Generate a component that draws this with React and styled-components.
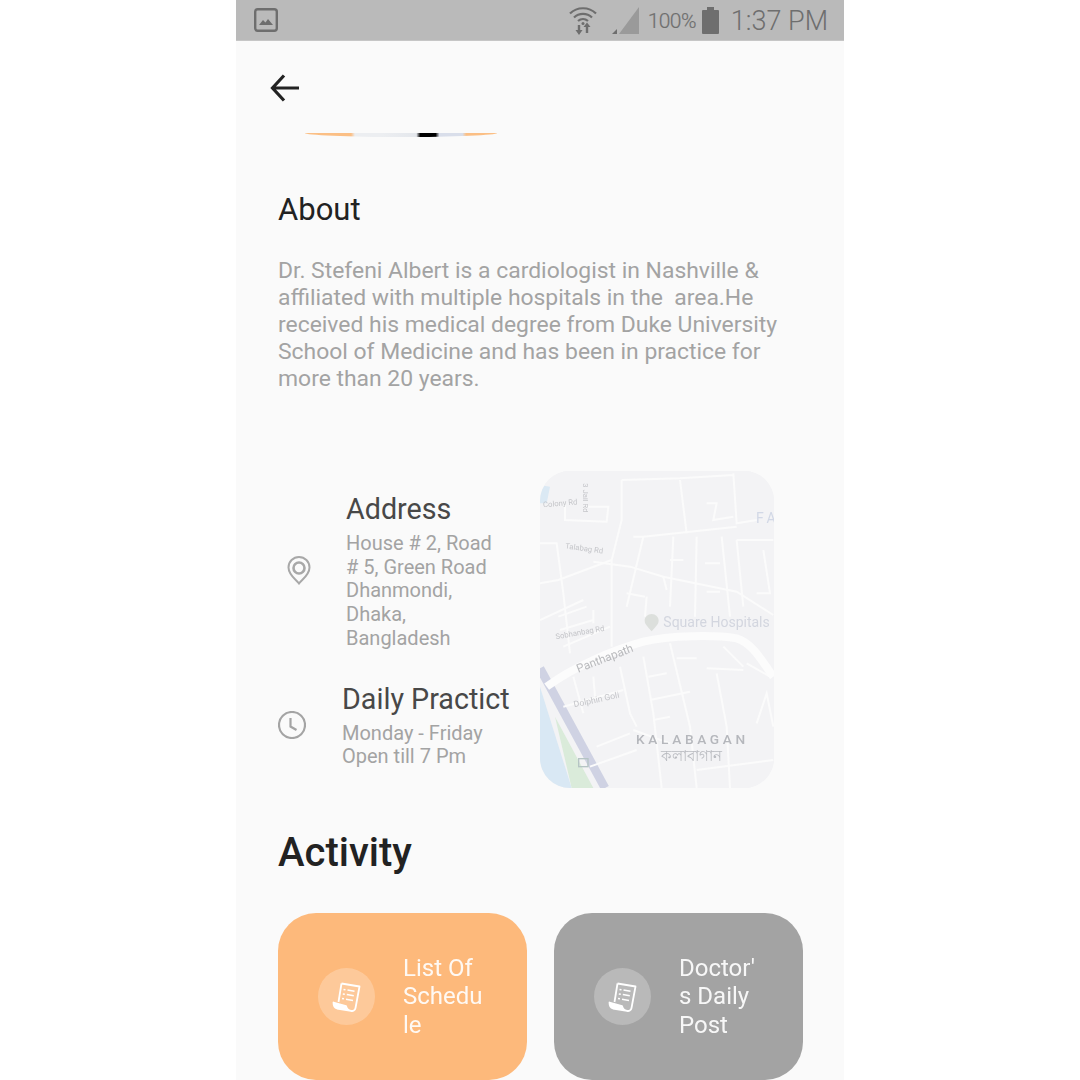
import styled, { createGlobalStyle } from "styled-components";

const Global = createGlobalStyle`
  html, body {
    margin: 0;
    padding: 0;
    background: #fff;
  }
  * {
    box-sizing: border-box;
  }
`;

const Phone = styled.div`
  width: 608px;
  height: 1080px;
  margin-left: 236px;
  background: #fafafa;
  overflow: hidden;
  font-family: Roboto, "Liberation Sans", sans-serif;
`;

const StatusBar = styled.div`
  height: 41px;
  background: #bababa;
  border-bottom: 1px solid #c6c6c6;
  display: flex;
  align-items: center;
  padding: 0 16px 0 18px;
  color: #6e6e6e;
  svg {
    display: block;
  }
`;

const StatusRight = styled.div`
  margin-left: auto;
  display: flex;
  align-items: center;
`;

const SignalSlot = styled.div`
  margin-left: 14px;
`;

const Percent = styled.span`
  font-size: 21px;
  font-weight: 300;
  letter-spacing: -0.6px;
  margin: 1px 6px 0 9px;
  -webkit-text-stroke: 0.2px #6e6e6e;
`;

const Time = styled.span`
  font-size: 27px;
  font-weight: 300;
  margin: 2px 0 0 12px;
`;

const Header = styled.div`
  height: 92px;
  padding: 33px 0 0 34px;
  svg {
    display: block;
  }
`;

const HeroEdge = styled.div`
  width: 192px;
  height: 4px;
  margin-left: 69px;
  border-radius: 0 0 50% 50% / 0 0 100% 100%;
  background: linear-gradient(
    90deg,
    #fbbf85 0 24%,
    #eceef1 26% 40%,
    #e4e7ec 58%,
    #000 60% 68%,
    #d9deea 70% 82%,
    #fbbf85 84%
  );
`;

const Content = styled.div`
  padding: 53px 0 0 42px;
`;

const AboutTitle = styled.h2`
  margin: 0;
  font-size: 31px;
  line-height: 40px;
  font-weight: 400;
  color: #222;
`;

const AboutText = styled.p`
  margin: 27px 0 0;
  width: 505px;
  font-size: 22.9px;
  line-height: 27px;
  color: #a3a3a3;
  white-space: pre-wrap;
`;

const InfoSection = styled.div`
  display: flex;
  margin-top: 79px;
`;

const InfoColumn = styled.div`
  width: 262px;
  padding-top: 21px;
  display: flex;
  flex-direction: column;
  gap: 31px;
`;

const InfoRow = styled.div`
  display: flex;
  align-items: center;
  padding-left: ${(p) => p.$indent}px;
  gap: ${(p) => p.$gap}px;
  svg {
    flex: none;
    display: block;
  }
`;

const InfoIcon = styled.div`
  margin-top: ${(p) => p.$shift}px;
`;

const InfoTitle = styled.div`
  font-size: 28.7px;
  line-height: 34px;
  color: #484848;
  white-space: nowrap;
`;

const InfoText = styled.div`
  margin-top: 6px;
  width: 155px;
  font-size: 20px;
  line-height: 23.7px;
  color: #a3a3a3;
`;

const MapBox = styled.div`
  width: 234px;
  height: 317px;
  border-radius: 30px;
  overflow: hidden;
  background: #f3f3f5;
  svg {
    display: block;
    filter: blur(0.5px);
  }
`;

const ActivityTitle = styled.h2`
  margin: 38px 0 0;
  font-size: 40px;
  line-height: 54px;
  font-weight: 500;
  color: #222;
`;

const Cards = styled.div`
  display: flex;
  gap: 27px;
  margin-top: 33px;
`;

const Card = styled.div`
  width: 249px;
  height: 167px;
  border-radius: 38px;
  background: ${(p) => p.$bg};
  display: flex;
  align-items: center;
  padding-left: 40px;
  gap: 28px;
  color: #fff;
`;

const CardIcon = styled.div`
  width: 57px;
  height: 57px;
  flex: none;
  border-radius: 50%;
  background: rgba(255, 255, 255, 0.24);
  display: flex;
  align-items: center;
  justify-content: center;
`;

const CardText = styled.div`
  width: 85px;
  font-size: 24px;
  line-height: 28.5px;
  overflow-wrap: anywhere;
  opacity: 0.92;
`;

const BackArrow = () => (
  <svg width="30" height="28" viewBox="0 0 30 28" fill="none" stroke="#222" strokeWidth="3.2">
    <path d="M29 14H3M14 1.500 2.500 14 14 26.500" />
  </svg>
);

const PictureIcon = () => (
  <svg width="24" height="24" viewBox="0 0 24 24">
    <rect x="1.2" y="1.2" width="21.6" height="21.6" rx="2.5" fill="none" stroke="#6e6e6e" strokeWidth="2.4" />
    <path d="M5 17l4-5 2.5 2.5L14 11l5 6z" fill="#6e6e6e" />
  </svg>
);

const WifiIcon = () => (
  <svg width="30" height="30" viewBox="0 0 30 30" fill="none" stroke="#6e6e6e" strokeWidth="2.2">
    <path d="M2 8.500C9 1.500 21 1.500 28 8.500M6 12.500c5-4.800 13-4.800 18 0M10 16c3-2.600 7-2.600 10 0" />
    <path d="M15 18.500v0" strokeWidth="3" strokeLinecap="round" />
    <path d="M11 20v7M19 28v-7" strokeWidth="2.400" />
    <path d="M7.500 25H14.500L11 30zM15.500 22h7L19 17.500z" fill="#6e6e6e" stroke="none" />
  </svg>
);

const SignalIcon = () => (
  <svg width="27" height="27" viewBox="0 0 27 27">
    <path d="M27 0v27H7z" fill="#9a9a9a" />
    <path d="M0 27l5-5v5z" fill="#6e6e6e" />
  </svg>
);

const BatteryIcon = () => (
  <svg width="17" height="27" viewBox="0 0 17 27">
    <path d="M5 0h7v3h4a1 1 0 0 1 1 1v22a1 1 0 0 1-1 1H1a1 1 0 0 1-1-1V4a1 1 0 0 1 1-1h4z" fill="#6e6e6e" />
  </svg>
);

const PinIcon = () => (
  <svg width="24" height="29" viewBox="0 0 24 29" fill="none" stroke="#a8a8a8" strokeWidth="2">
    <path d="M12 27.500C9 23.500 1.500 19 1.500 11.500a10.500 10.500 0 0 1 21 0C22.500 19 15 23.500 12 27.500z" />
    <circle cx="12" cy="12" r="5.500" strokeWidth="2.600" />
  </svg>
);

const ClockIcon = () => (
  <svg width="28" height="28" viewBox="0 0 28 28" fill="none" stroke="#a4a4a4" strokeWidth="2.200">
    <circle cx="14" cy="14" r="13" />
    <path d="M12.500 7v8.500l6 3.500" />
  </svg>
);

const ScheduleIcon = () => (
  <svg width="30" height="32" viewBox="0 0 30 32" fill="none" stroke="#fff" strokeWidth="1.8" strokeLinejoin="round">
    <path d="M9.500 2.500 27.500 5.500 23.500 27c-.4 2.400-2.600 3.400-4.500 2.800" />
    <path d="M9.500 2.500 6.500 21" />
    <path d="M1.500 21.500 14 25c.5 2 2.500 4.500 5 4.800L5 27.500c-2-.5-3.500-3-3.500-6z" fill="#fff" />
    <path d="M11.500 8.500l2 .3M15.500 9l7 1.200M10.800 13l2 .3M14.800 13.600l7 1.200M10 17.500l2 .3M14 18.200l7 1.200" strokeWidth="1.500" />
  </svg>
);

// road lines read off the reference, in its 3x crop coordinates
const roads = [
  "M275 60L450 55L610 45M610 40L620 190L680 180M275 60V180L245 300V560",
  "M105 130V180L230 185L235 140H170",
  "M30 250H80L100 400L120 580M30 370L85 360L245 300M30 480L160 420",
  "M190 305L300 320L400 350L620 395L730 465",
  "M310 230H340L620 200M340 230L290 440M430 230L420 440M500 230L495 470",
  "M575 230L600 470M620 240L640 440M620 240H730M450 60L470 220",
  "M530 130H560L550 180L610 170M700 270L720 400L680 400",
  "M85 470L170 440M90 510L190 480M190 450V490M100 560L240 500",
  "M420 300H460M525 310H570M290 400L345 410M530 395H570M350 410L345 470M400 350L410 390",
  "M130 650L160 760M190 650L195 710M270 620L300 760L320 800",
  "M340 590L370 760L395 984M420 550L480 800L500 984",
  "M440 595H500M355 650L410 640M530 625L640 630M580 560L640 620",
  "M560 640L590 800L600 984M650 610L720 650",
  "M360 720L480 695M370 780L420 770M420 850L310 810",
  "M100 740L280 690M200 860L300 820M180 920L320 870",
  "M500 930L730 900M680 790L710 700L730 800",
];

const MapArt = () => (
  <svg width="234" height="317" viewBox="30 33 702 951" fontFamily="Roboto, sans-serif">
    <rect x="30" y="33" width="702" height="951" fill="#f3f3f5" />
    <path d="M30 75L60 80L50 130H30z" fill="#dbe9f4" />
    <path d="M30 680L125 984H30z" fill="#d9e8f4" />
    <path d="M75 770L190 984H125z" fill="#daebda" />
    <path d="M30 625L225 984" stroke="#cfd2e3" strokeWidth="26" fill="none" />
    <g fill="none" stroke="#fbfbfb" strokeWidth="6">
      {roads.map((d) => (
        <path key={d} d={d} />
      ))}
    </g>
    <path
      d="M50 680C130 620 250 570 340 545C420 525 560 525 620 535C670 550 700 610 730 650"
      fill="none"
      stroke="#fcfcfc"
      strokeWidth="24"
    />
    <path
      d="M365 462c-12 0-21 9-21 20 0 12 14 22 21 32 7-10 21-20 21-32 0-11-9-20-21-20z"
      fill="#dcdfdc"
    />
    <g fill="#c4c5c9" fontSize="23">
      <text x="40" y="142" transform="rotate(-5 40 142)">Colony Rd</text>
      <text x="105" y="265" transform="rotate(8 105 265)">Talabag Rd</text>
      <text x="78" y="538" transform="rotate(-10 78 538)">Sobhanbag Rd</text>
      <text x="133" y="742" transform="rotate(-12 133 742)" fontSize="26">Dolphin Goli</text>
      <text x="160" y="70" transform="rotate(90 160 70)">3 Jail Rd</text>
    </g>
    <text x="145" y="638" transform="rotate(-21 145 638)" fontSize="35" fill="#b9babd">Panthapath</text>
    <text x="400" y="500" fontSize="42" fill="#d3d6df">Square Hospitals</text>
    <text x="678" y="190" fontSize="42" fill="#d2d8e6" letterSpacing="12">FA</text>
    <text x="318" y="851" fontSize="41" fontWeight="500" fill="#b5b7bc" letterSpacing="11">KALABAGAN</text>
    <text x="392" y="904" fontSize="44" fill="#b9bbc0">কলাবাগান</text>
    <rect x="146" y="896" width="28" height="24" fill="none" stroke="#b5c4c4" strokeWidth="4" />
  </svg>
);

const App = () => {
  return (
    <Phone>
      <Global />
      <StatusBar>
        <PictureIcon />
        <StatusRight>
          <WifiIcon />
          <SignalSlot>
            <SignalIcon />
          </SignalSlot>
          <Percent>100%</Percent>
          <BatteryIcon />
          <Time>1:37 PM</Time>
        </StatusRight>
      </StatusBar>
      <Header>
        <BackArrow />
      </Header>
      <HeroEdge />
      <Content>
        <AboutTitle>About</AboutTitle>
        <AboutText>
          {"Dr. Stefeni Albert is a cardiologist in Nashville & affiliated with multiple hospitals in the  area.He received his medical degree from Duke University School of Medicine and has been in practice for more than 20 years."}
        </AboutText>
        <InfoSection>
          <InfoColumn>
            <InfoRow $indent={9} $gap={35}>
              <InfoIcon $shift={-2}>
                <PinIcon />
              </InfoIcon>
              <div>
                <InfoTitle>Address</InfoTitle>
                <InfoText>House # 2, Road # 5, Green Road Dhanmondi, Dhaka, Bangladesh</InfoText>
              </div>
            </InfoRow>
            <InfoRow $indent={0} $gap={36}>
              <InfoIcon $shift={0}>
                <ClockIcon />
              </InfoIcon>
              <div>
                <InfoTitle>Daily Practict</InfoTitle>
                <InfoText>Monday - Friday Open till 7 Pm</InfoText>
              </div>
            </InfoRow>
          </InfoColumn>
          <MapBox>
            <MapArt />
          </MapBox>
        </InfoSection>
        <ActivityTitle>Activity</ActivityTitle>
        <Cards>
          <Card $bg="#fdb97b">
            <CardIcon>
              <ScheduleIcon />
            </CardIcon>
            <CardText>List Of Schedule</CardText>
          </Card>
          <Card $bg="#a3a3a3">
            <CardIcon>
              <ScheduleIcon />
            </CardIcon>
            <CardText>Doctor's Daily Post</CardText>
          </Card>
        </Cards>
      </Content>
    </Phone>
  );
};

export default App;
